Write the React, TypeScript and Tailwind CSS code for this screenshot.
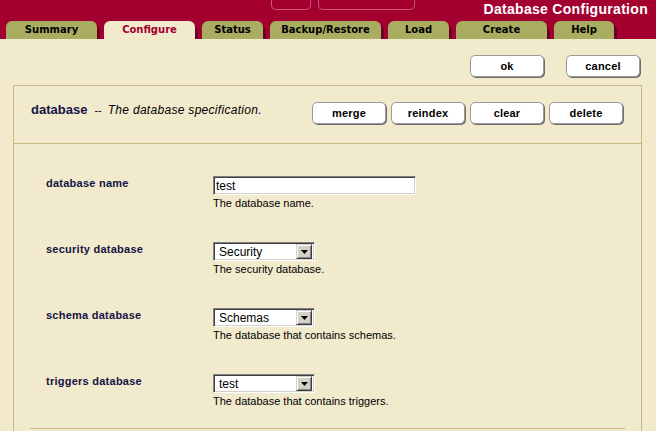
import React from 'react';

// Tabs across the top of the header. Widths are the painted tab sizes.
const TABS: { label: string; width: string; active?: boolean }[] = [
  { label: 'Summary', width: 'w-[91px]' },
  { label: 'Configure', width: 'w-[91px]', active: true },
  { label: 'Status', width: 'w-[61px]' },
  { label: 'Backup/Restore', width: 'w-[111px]' },
  { label: 'Load', width: 'w-[61px]' },
  { label: 'Create', width: 'w-[91px]' },
  { label: 'Help', width: 'w-[60px]' },
];

type Field = {
  label: string;
  kind: 'text' | 'select';
  value: string;
  hint: string;
};

const FIELDS: Field[] = [
  { label: 'database name', kind: 'text', value: 'test', hint: 'The database name.' },
  { label: 'security database', kind: 'select', value: 'Security', hint: 'The security database.' },
  { label: 'schema database', kind: 'select', value: 'Schemas', hint: 'The database that contains schemas.' },
  { label: 'triggers database', kind: 'select', value: 'test', hint: 'The database that contains triggers.' },
];

function Tab({ label, width, active }: { label: string; width: string; active?: boolean }) {
  return (
    <div
      className={[
        'flex h-[18px] items-center justify-center rounded-t-[6px] font-["DejaVu_Sans",sans-serif] text-[10px] font-bold leading-[12px] shadow-[3px_4px_0_#6a0024]',
        width,
        active ? 'bg-[#f2eacd] text-[#a00030]' : 'bg-[#a8ad62] text-black',
      ].join(' ')}
    >
      {label}
    </div>
  );
}

function Button({ children }: { children: React.ReactNode }) {
  return (
    <button
      type="button"
      className="flex h-[22px] w-[74px] items-center justify-center rounded-[5px] border border-[#9a9a9a] bg-white text-[11px] font-bold leading-[13px] tracking-[0.2px] text-black shadow-[1px_1px_0_#6e6e6e]"
    >
      {children}
    </button>
  );
}

// Classic sunken control frame (dark top/left, light bottom/right).
const SUNKEN =
  'border border-[#808080] border-b-white border-r-white bg-white shadow-[inset_1px_1px_0_#404040,inset_-1px_-1px_0_#d4d0c8]';

function TextInput({ value }: { value: string }) {
  return (
    <div className={`flex h-[19px] w-[203px] items-center px-[2px] text-[12px] leading-[14px] text-black ${SUNKEN}`}>
      {value}
    </div>
  );
}

function Select({ value }: { value: string }) {
  return (
    <div className={`flex h-[19px] w-[102px] items-center p-[2px] ${SUNKEN}`}>
      <span className="flex-1 pl-[3px] text-[12px] leading-[14px] text-black">{value}</span>
      <span className="flex h-[15px] w-[16px] items-center justify-center border border-[#d4d0c8] border-b-[#404040] border-r-[#404040] bg-[#d4d0c8] shadow-[inset_1px_1px_0_#ffffff,inset_-1px_-1px_0_#808080]">
        <svg width="7" height="4" viewBox="0 0 7 4">
          <path d="M0 0h7L3.5 4z" fill="#000" />
        </svg>
      </span>
    </div>
  );
}

export default function App() {
  return (
    <div className="h-[431px] w-[656px] overflow-hidden bg-[#f2eacd] font-['Liberation_Sans',Arial,sans-serif]">
      {/* header band */}
      <div className="flex h-[39px] flex-col overflow-hidden bg-[#a3002f]">
        <div className="flex h-[21px] items-start">
          <div className="ml-[271px] h-[10px] w-[40px] rounded-b-[5px] border border-t-0 border-[#c9577a]" />
          <div className="ml-[7px] h-[10px] w-[97px] rounded-b-[5px] border border-t-0 border-[#c9577a]" />
          <div className="ml-auto pr-[8px] pt-[1px] text-[14px] font-bold leading-[16px] tracking-[0.3px] text-white">
            Database Configuration
          </div>
        </div>
        <div className="flex h-[18px] items-end gap-[7px] pl-[6px]">
          {TABS.map((t) => (
            <Tab key={t.label} {...t} />
          ))}
        </div>
      </div>

      <div className="flex justify-end gap-[22px] pr-[16px] pt-[16px]">
        <Button>ok</Button>
        <Button>cancel</Button>
      </div>

      <div className="ml-[13px] mr-[14px] mt-[8px] h-[400px] border border-b-0 border-[#c9b883]">
        <div className="flex items-start justify-between border-b border-[#c9b883] pb-[19px] pl-[17px] pr-[18px] pt-[16px]">
          <p className="flex items-baseline leading-[16px] text-[#141446]">
            <span className="text-[13px] font-bold">database</span>
            <span className="ml-[7px] text-[11px] text-black">--</span>
            <span className="ml-[6px] text-[12px] italic tracking-[0.3px] text-black">
              The database specification.
            </span>
          </p>
          <div className="flex gap-[5px]">
            <Button>merge</Button>
            <Button>reindex</Button>
            <Button>clear</Button>
            <Button>delete</Button>
          </div>
        </div>

        <div className="mx-[16px] flex flex-col gap-[32px] border-b border-[#c9b883] pb-[20px] pt-[32px]">
          {FIELDS.map((f) => (
            <div key={f.label} className="flex">
              <div className="w-[183px] shrink-0 pl-[16px] pt-[1px] text-[11px] font-bold leading-[13px] tracking-[0.25px] text-[#141446]">
                {f.label}
              </div>
              <div className="flex flex-col">
                {f.kind === 'text' ? <TextInput value={f.value} /> : <Select value={f.value} />}
                <p className="mt-[2px] text-[11px] leading-[13px] text-black">{f.hint}</p>
              </div>
            </div>
          ))}
        </div>
      </div>
    </div>
  );
}
